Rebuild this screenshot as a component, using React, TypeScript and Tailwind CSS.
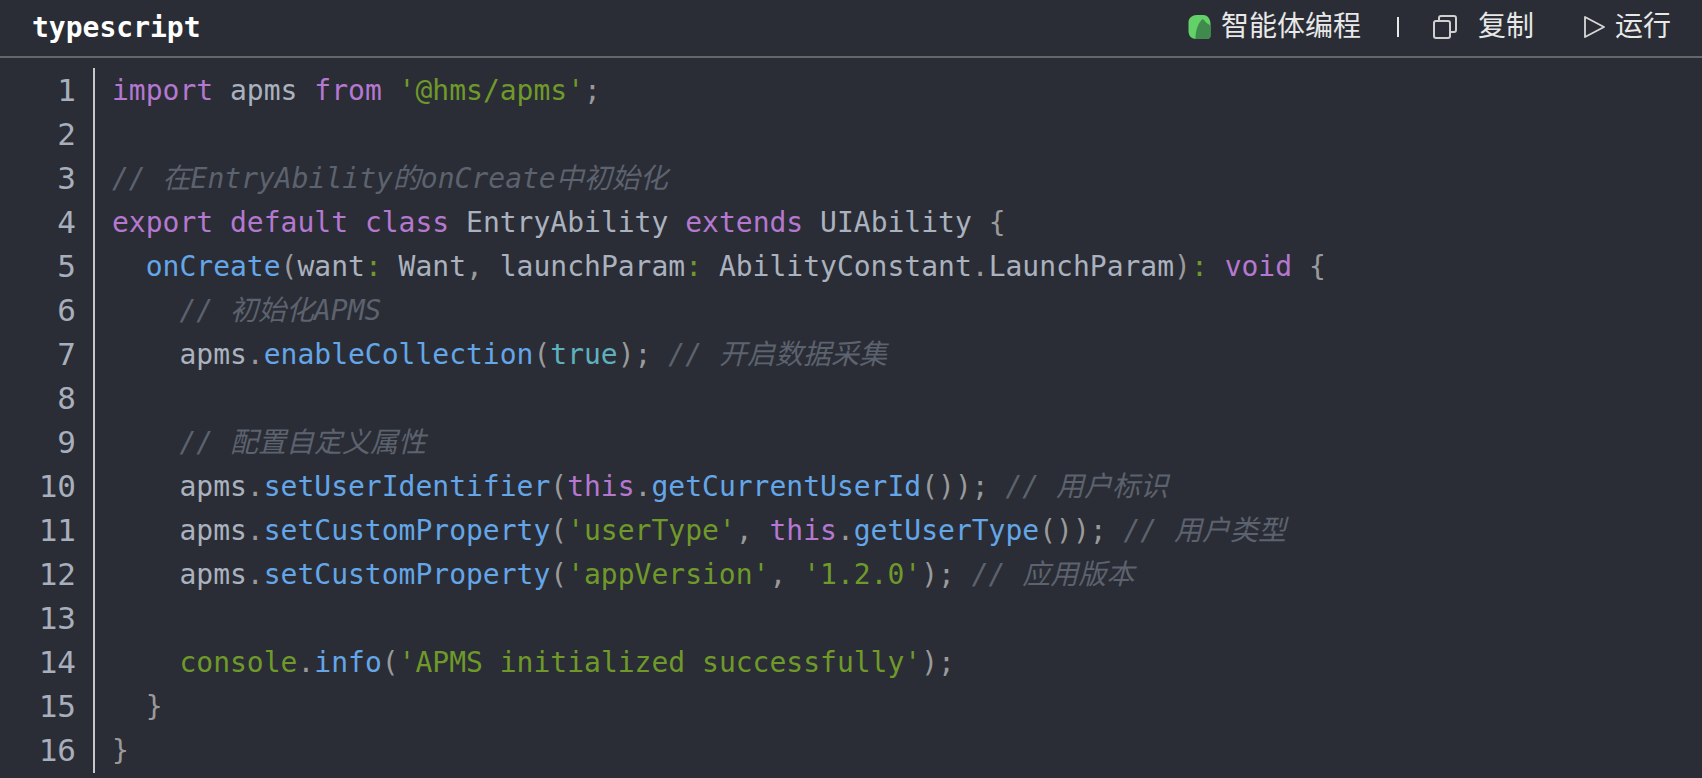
type Token = [string, string?];

const kw = 'text-[#b578d0]';
const str = 'text-[#6f9a2a]';
const fn = 'text-[#64a6e8]';
const com = 'text-[#5c626e] italic';
const lit = 'text-[#5fb0bd]';
const punc = 'text-[#9a9a9a]';

const lines: Token[][] = [
  [['import', kw], [' apms '], ['from', kw], [' '], ["'@hms/apms'", str], [';', punc]],
  [],
  [['// 在EntryAbility的onCreate中初始化', com]],
  [['export', kw], [' '], ['default', kw], [' '], ['class', kw], [' EntryAbility '], ['extends', kw], [' UIAbility '], ['{', punc]],
  [['  '], ['onCreate', fn], ['(', punc], ['want'], [':', str], [' Want'], [',', punc], [' launchParam'], [':', str], [' AbilityConstant'], ['.', punc], ['LaunchParam'], [')', punc], [':', str], [' '], ['void', kw], [' '], ['{', punc]],
  [['    '], ['// 初始化APMS', com]],
  [['    apms'], ['.', punc], ['enableCollection', fn], ['(', punc], ['true', lit], [')', punc], [';', punc], [' '], ['// 开启数据采集', com]],
  [],
  [['    '], ['// 配置自定义属性', com]],
  [['    apms'], ['.', punc], ['setUserIdentifier', fn], ['(', punc], ['this', kw], ['.', punc], ['getCurrentUserId', fn], ['(', punc], [')', punc], [')', punc], [';', punc], [' '], ['// 用户标识', com]],
  [['    apms'], ['.', punc], ['setCustomProperty', fn], ['(', punc], ["'userType'", str], [',', punc], [' '], ['this', kw], ['.', punc], ['getUserType', fn], ['(', punc], [')', punc], [')', punc], [';', punc], [' '], ['// 用户类型', com]],
  [['    apms'], ['.', punc], ['setCustomProperty', fn], ['(', punc], ["'appVersion'", str], [',', punc], [' '], ["'1.2.0'", str], [')', punc], [';', punc], [' '], ['// 应用版本', com]],
  [],
  [['    '], ['console', str], ['.', punc], ['info', fn], ['(', punc], ["'APMS initialized successfully'", str], [')', punc], [';', punc]],
  [['  '], ['}', punc]],
  [['}', punc]],
];

export default function App() {
  return (
    <div className="w-full h-screen overflow-hidden bg-[#2a2d35] font-['DejaVu_Sans_Mono','Noto_Sans_CJK_SC',monospace]">
      <div className="h-[58px] flex items-center justify-between pl-[32px] pr-[31px] border-b-2 border-[#666666]">
        <span className="text-[28px] font-bold text-white">typescript</span>
        <div className="flex items-center pb-[2px] text-[28px] text-[#e8e8e8] font-['Noto_Sans_CJK_SC','Noto_Sans',sans-serif]">
          <svg width="23" height="24" viewBox="0 0 22 24" className="mr-[10px]">
            <path d="M8 0h7c4 0 7 4 7 9v12c0 2-2 3-4 3H8c-5 0-8-3-8-8V7c0-4 4-7 8-7z" fill="#62d268" />
            <path d="M14 4c2 1 3 3 4 4 2 1 4 2 4 4v9c0 2-2 3-4 3H7c0-8 2-15 7-20z" fill="#3f8a4c" />
          </svg>
          <span className="pb-[6px]">智能体编程</span>
          <span className="w-[2px] h-[20px] bg-[#e8e8e8] ml-[36px] mr-[34px]" />
          <svg width="24" height="24" viewBox="0 0 24 24" fill="none" stroke="#d0d0d0" strokeWidth="2" className="mr-[21px]">
            <rect x="1" y="6" width="16" height="17" rx="2" />
            <path d="M6 6V3a2 2 0 0 1 2-2h13a2 2 0 0 1 2 2v12a2 2 0 0 1-2 2h-4" />
          </svg>
          <span className="pb-[6px]">复制</span>
          <svg width="24" height="24" viewBox="0 0 24 24" fill="none" stroke="#d8d8d8" strokeWidth="1.8" strokeLinejoin="round" className="ml-[48px] mr-[9px]">
            <path d="M3 2l19 10L3 22z" />
          </svg>
          <span className="pb-[6px]">运行</span>
        </div>
      </div>
      <div className="flex pt-[10px] text-[#abb2bf]">
        <div className="w-[95px] pr-[17px] text-right text-[31px] leading-[44px] border-r-2 border-[#c8c8c8] shrink-0">
          {lines.map((_, i) => (
            <div key={i} className="h-[44px] text-[#a8afbc]">{i + 1}</div>
          ))}
        </div>
        <pre className="pl-[17px] pt-[1px] text-[28px] leading-[44px] font-['DejaVu_Sans_Mono','Noto_Sans_CJK_SC',monospace]">
          {lines.map((line, i) => (
            <div key={i} className="h-[44px]">
              {line.map((t, j) => (
                <span key={j} className={t[1]}>{t[0]}</span>
              ))}
            </div>
          ))}
        </pre>
      </div>
    </div>
  );
}
